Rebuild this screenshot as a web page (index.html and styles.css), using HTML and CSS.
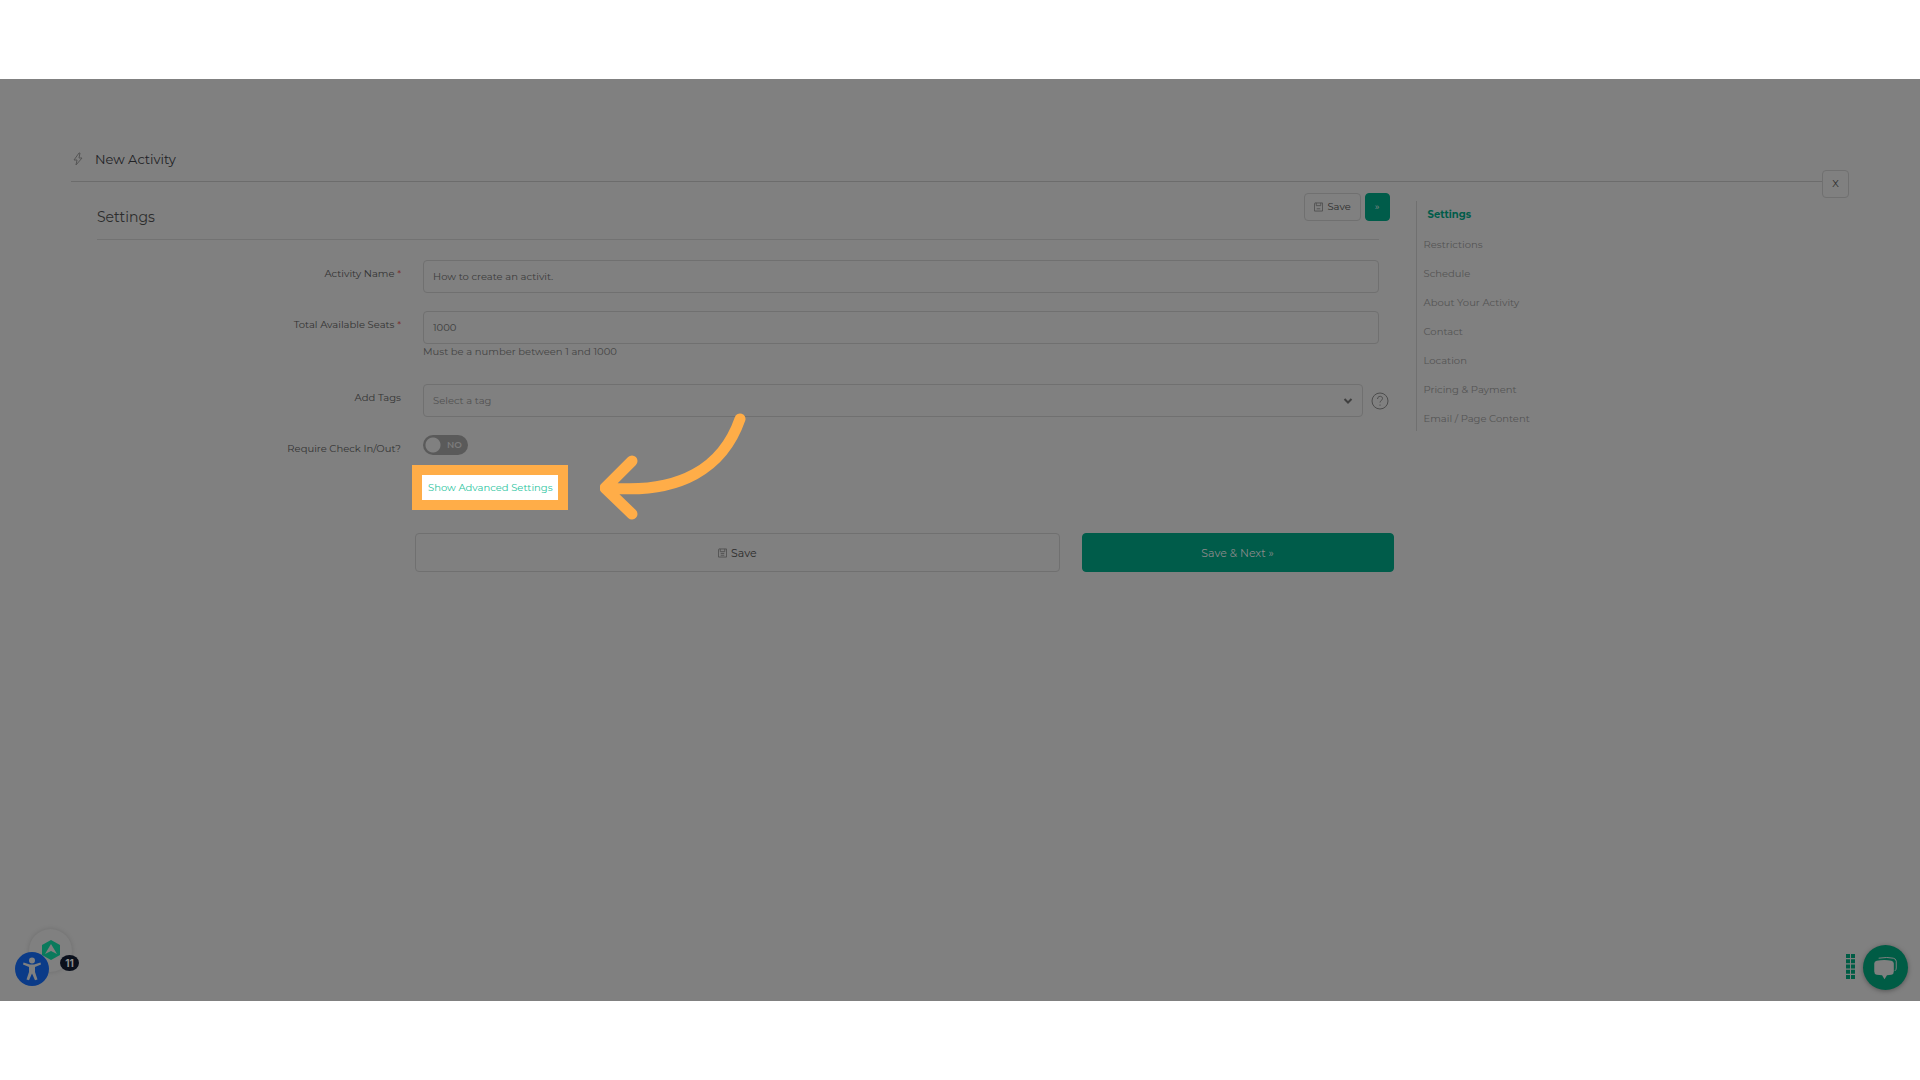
FILE: index.html
```html
<!DOCTYPE html>
<html lang="en">
<head>
    <meta charset="UTF-8" />
    <meta name="viewport" content="width=device-width, initial-scale=1" />
    <title>New Activity</title>
    <link rel="stylesheet" href="styles.css">
</head>
<body>
<div class="page">
    <header class="page-header">
        <svg class="bolt" viewBox="0 0 10 14"><path d="M6 1 1 8h3L3 13l6-7H6l1-5z"/></svg>
        <h1>New Activity</h1>
        <button type="button" class="btn close-btn">X</button>
    </header>

    <div class="columns">
        <main>
            <div class="section-head">
                <h2>Settings</h2>
                <div class="head-actions">
                    <button type="button" class="btn small-btn">
                        <svg class="disk" viewBox="0 0 10 10"><path d="M1 .5h8.500v9h-9V1zM2.500.5v3h5v-3M3 7h4"/></svg>
                        Save
                    </button>
                    <button type="button" class="btn small-btn btn-green">»</button>
                </div>
            </div>

            <form id="activity-form">
                <div class="form-row">
                    <label for="name">Activity Name <span class="req">*</span></label>
                    <input type="text" id="name" value="How to create an activit.">
                </div>
                <div class="form-row seats-row">
                    <label for="seats">Total Available Seats <span class="req">*</span></label>
                    <div>
                        <input type="text" id="seats" value="1000">
                        <p class="hint">Must be a number between 1 and 1000</p>
                    </div>
                </div>
                <div class="form-row tags-row">
                    <label for="tags">Add Tags</label>
                    <div class="tags">
                        <div class="select-wrap">
                            <select id="tags"><option>Select a tag</option></select>
                            <svg class="chevron" viewBox="0 0 10 6"><path d="M1.500 1 5 4.500 8.500 1"/></svg>
                        </div>
                        <svg class="help" viewBox="0 0 18 18"><circle cx="9" cy="9" r="8"/><path d="M6.500 7c0-3.500 5-3.500 5-.5 0 2-2.500 2-2.500 4M9 12.500v1.200"/></svg>
                    </div>
                </div>
                <div class="form-row check-row">
                    <label for="checkin">Require Check In/Out?</label>
                    <div class="toggle">
                        <input type="checkbox" id="checkin">
                        <span>NO</span>
                    </div>
                </div>
                <div class="advanced">
                    <a href="#">Show Advanced Settings</a>
                    <svg class="arrow" viewBox="0 0 146 108"><path d="M140 7C123 56 80 82 10 76M32 49 5 76l27 26"/></svg>
                </div>
                <div class="form-actions">
                    <button type="button" class="btn">
                        <svg class="disk" viewBox="0 0 10 10"><path d="M1 .5h8.500v9h-9V1zM2.500.5v3h5v-3M3 5.500h4M3 7.500h4"/></svg>
                        Save
                    </button>
                    <button type="submit" class="btn btn-green">Save &amp; Next »</button>
                </div>
            </form>
        </main>

        <nav class="steps">
            <a href="#" class="active">Settings</a>
            <a href="#">Restrictions</a>
            <a href="#">Schedule</a>
            <a href="#">About Your Activity</a>
            <a href="#">Contact</a>
            <a href="#">Location</a>
            <a href="#">Pricing &amp; Payment</a>
            <a href="#">Email / Page Content</a>
        </nav>
    </div>

    <!-- floating widgets -->
    <div class="launcher">
        <svg viewBox="0 0 18 20"><path fill="#0a7a5c" d="M9 0 18 5v10l-9 5-9-5V5z"/><path fill="#808080" d="m9 4 6 10-6-3-6 3z"/></svg>
    </div>
    <button type="button" class="access" aria-label="Accessibility">
        <svg viewBox="0 0 34 34"><circle cx="17" cy="8.500" r="3"/><path d="M8.500 10.500 15 12.500h4l6.500-2 .5 2-6 2.500V20l2.500 7.500-2.500.7L17 21.500l-3 6.700-2.500-.7L14 20v-5l-6-2.500z"/></svg>
    </button>
    <span class="count">11</span>
    <svg class="grip" viewBox="0 0 9 25">
        <path d="M0 2h9M0 7.250h9M0 12.500h9M0 17.750h9M0 23h9"/>
    </svg>
    <button type="button" class="chat" aria-label="Chat">
        <svg viewBox="0 0 46 46">
            <path class="back" d="M16 13.500q9-1.500 15 0 2.500.5 3 3v7q0 2-1.500 3"/>
            <path class="front" d="M14 16q8-1.500 15 0 2.500.5 2.500 3v8q0 3-2.500 3.500l-4.500.5-2.500 4-2.500-4-5.500-.5q-2.500-.5-2.500-3.500v-8q0-2.500 2.500-3z"/>
        </svg>
    </button>
</div>
</body>
</html>
```
FILE: styles.css
```css
* {
    box-sizing: border-box;
}
body {
    margin: 0;
    padding: 79px 0;
    background-color: #fff;
    font-family: Montserrat, Inter, "Open Sans", sans-serif;
    font-size: 10px;
    line-height: 16px;
    color: #333;
}
.page {
    position: relative;
    min-height: calc(100vh - 158px);
    padding: 60px 71px 0;
    background-color: #808080;
}
h1, h2, p {
    margin: 0;
    font-weight: 400;
}
a {
    text-decoration: none;
}
svg {
    display: block;
    fill: none;
}
.page-header {
    position: relative;
    display: flex;
    align-items: center;
    gap: 12px;
    height: 43px;
    padding: 0 0 2px 2px;
    border-bottom: 1px solid #6c6c6c;
}
.page-header h1 {
    font-size: 13px;
    line-height: 20px;
    color: #222326;
}
.bolt {
    width: 10px;
    height: 14px;
    stroke: #555;
}
.btn {
    display: flex;
    align-items: center;
    justify-content: center;
    gap: 4px;
    padding: 0;
    font: inherit;
    color: #2c2c2c;
    background-color: #808080;
    border: 1px solid #707070;
    border-radius: 4px;
    cursor: pointer;
}
.close-btn {
    position: absolute;
    right: 0;
    bottom: -17px;
    width: 27px;
    height: 28px;
}
.btn-green {
    color: #8a8a8a;
    background-color: #005c4a;
    border-color: #005c4a;
}
.columns {
    display: grid;
    grid-template-columns: 3fr 1fr;
}
main {
    padding: 11px 26px 0;
}
.section-head {
    display: flex;
    justify-content: space-between;
    height: 47px;
    border-bottom: 1px solid #727272;
}
.section-head h2 {
    padding-top: 14px;
    font-size: 14px;
    line-height: 20px;
    color: #2c2c2c;
}
.head-actions {
    display: flex;
    gap: 4px;
    margin-right: -11px;
}
.small-btn {
    height: 28px;
    padding: 0 9px;
}
.disk {
    width: 9px;
    height: 10px;
    stroke: #505050;
}
form {
    padding-top: 20px;
}
.form-row {
    display: grid;
    grid-template-columns: 304px 1fr;
    gap: 22px;
}
.form-row label {
    padding-top: 6px;
    text-align: right;
}
.req {
    color: #7a2020;
}
.form-row input[type="text"], select {
    display: block;
    width: 100%;
    height: 33px;
    padding: 0 9px;
    font: inherit;
    color: #3c3c3c;
    background-color: #808080;
    border: 1px solid #707070;
    border-radius: 4px;
}
.seats-row {
    margin-top: 18px;
}
.hint {
    color: #444;
}
.tags-row {
    margin-top: 24px;
}
.tags {
    display: flex;
    align-items: center;
    gap: 8px;
    margin-right: -10px;
}
.select-wrap {
    position: relative;
    flex: 1;
}
.form-row select {
    appearance: none;
    color: #505050;
}
.chevron {
    position: absolute;
    top: 14px;
    right: 10px;
    width: 10px;
    height: 6px;
    stroke: #404040;
    stroke-width: 2;
}
.help {
    width: 18px;
    height: 18px;
    stroke: #4c4c4c;
}
.check-row {
    margin-top: 18px;
}
.toggle {
    position: relative;
    width: 45px;
    height: 20px;
}
.toggle input {
    appearance: none;
    width: 45px;
    height: 20px;
    margin: 0;
    background: radial-gradient(circle at 10px 10px, #808080 7px, #5a5a5a 8px);
    border-radius: 10px;
}
.toggle span {
    position: absolute;
    top: 2px;
    left: 24px;
    font-size: 9px;
    font-weight: 600;
    color: #7c7c7c;
    pointer-events: none;
}
.advanced {
    position: relative;
    display: flex;
    margin: 18px 0 0 325px;
}
.advanced a {
    padding: 5px 5px 4px 6px;
    color: #2cc5a0;
    background-color: #fff;
    outline: 10px solid #ffad48;
}
.arrow {
    position: absolute;
    top: -63px;
    left: 178px;
    width: 146px;
    height: 108px;
    stroke: #ffad48;
    stroke-width: 11;
    stroke-linecap: round;
    stroke-linejoin: round;
}
.form-actions {
    display: grid;
    grid-template-columns: 31fr 15fr;
    gap: 22px;
    margin: 33px -15px 0 318px;
}
.form-actions .btn {
    height: 39px;
    font-size: 11px;
}
.steps {
    display: flex;
    flex-direction: column;
    justify-self: start;
    align-self: start;
    gap: 13px;
    margin: 19px 0 0 11px;
    padding: 6px 0 4px 7px;
    border-left: 1px solid #707070;
}
.steps a {
    color: #545454;
}
.steps .active {
    padding: 0 0 1px 4px;
    font-weight: 700;
    color: #005c4a;
}
.launcher, .access, .count, .grip, .chat {
    position: absolute;
}
.launcher {
    bottom: 29px;
    left: 29px;
    width: 43px;
    height: 43px;
    padding: 11px 13px;
    background-color: #808080;
    border-radius: 50%;
    box-shadow: 0 0 5px rgba(0, 0, 0, 0.15);
}
.launcher svg {
    width: 18px;
    height: 20px;
}
.access {
    bottom: 15px;
    left: 15px;
    width: 34px;
    height: 34px;
    padding: 0;
    background-color: #0b3b88;
    border: 0;
    border-radius: 50%;
}
.access svg {
    fill: #808080;
}
.count {
    bottom: 30px;
    left: 60px;
    width: 19px;
    font-family: Inter, sans-serif;
    font-weight: 700;
    text-align: center;
    color: #909090;
    background-color: #0a101c;
    border-radius: 50%;
}
.grip {
    right: 65px;
    bottom: 22px;
    width: 9px;
    height: 25px;
    stroke: #005c45;
    stroke-width: 4;
    stroke-dasharray: 4 1;
}
.chat {
    right: 12px;
    bottom: 11px;
    width: 45px;
    height: 45px;
    padding: 0;
    background-color: #005c45;
    border: 0;
    border-radius: 50%;
    box-shadow: 0 1px 5px rgba(0, 0, 0, 0.35);
}
.chat .back {
    stroke: #808080;
    stroke-width: 1;
}
.chat .front {
    fill: #808080;
}
```
